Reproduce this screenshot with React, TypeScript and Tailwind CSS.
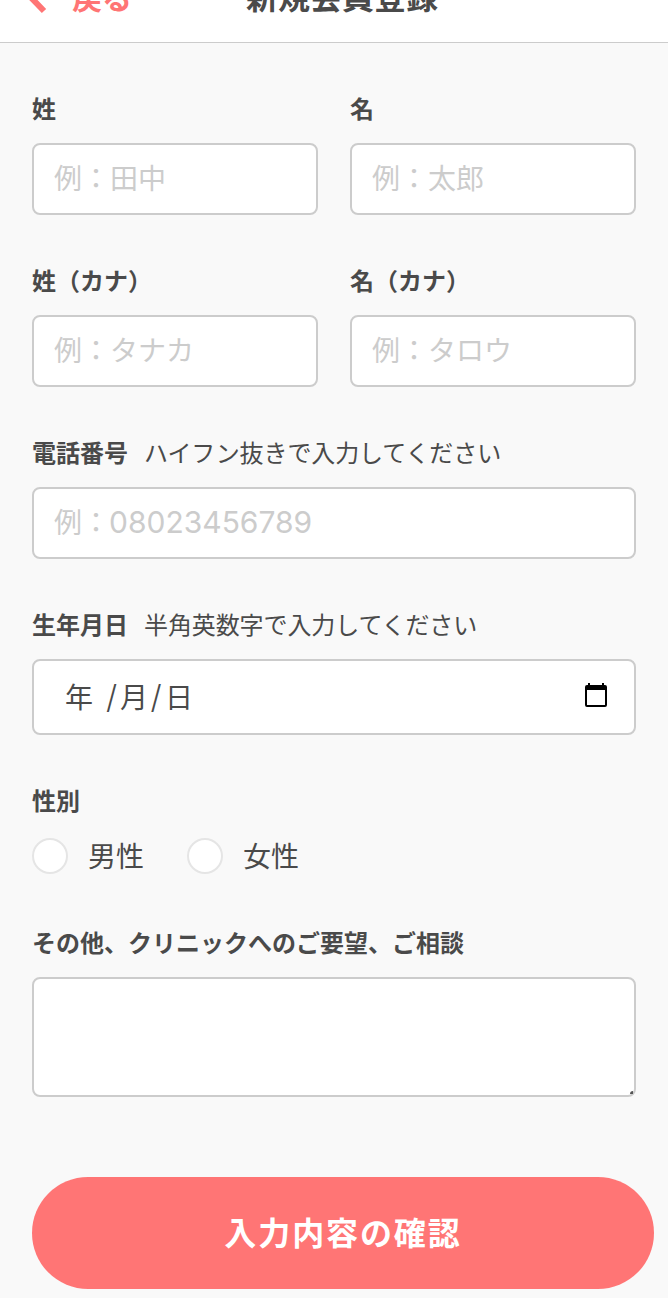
interface FieldProps {
  label: string;
  note?: string;
  children: React.ReactNode;
}

const Field = ({ label, note, children }: FieldProps) => {
  return (
    <div className="min-w-0 flex-1">
      <div className="mb-4 flex h-8 items-center gap-4 pb-0.5 text-[24px] leading-8">
        <span className="font-bold">{label}</span>
        {note && <span className="tracking-[-0.1px]">{note}</span>}
      </div>
      {children}
    </div>
  );
};

const TextInput = ({ placeholder }: { placeholder: string }) => {
  return (
    <input
      type="text"
      placeholder={placeholder}
      className="block h-[72px] w-full rounded-lg border-2 border-[#ccc] bg-white px-5 pt-0.5 text-[28px] outline-none placeholder:text-[#ccc]"
    />
  );
};

const Radio = ({ label }: { label: string }) => {
  return (
    <label className="flex h-9 items-center gap-5 text-[28px] leading-9">
      <span className="h-9 w-9 rounded-full border-2 border-[#e5e5e5] bg-white" />
      <span className="pt-1">{label}</span>
    </label>
  );
};

const CalendarIcon = () => {
  return (
    <svg width="24" height="26" viewBox="0 0 24 26" className="mb-0.5">
      <path
        fillRule="evenodd"
        fill="#000"
        d="M4 0h2v2h12V0h2v2h1a2 2 0 0 1 2 2v18a2 2 0 0 1-2 2H3a2 2 0 0 1-2-2V4a2 2 0 0 1 2-2h1zM3 7v15h18V7z"
      />
    </svg>
  );
};

export default function App() {
  return (
    <div className="h-[1298px] w-[668px] overflow-hidden bg-[#f9f9f9] font-['Liberation_Sans','Noto_Sans_CJK_JP',sans-serif] text-[#4a4a4a]">
      <header className="relative flex h-[43px] justify-center border-b border-[#ccc] bg-white">
        <a className="absolute -top-[26px] left-[27px] flex h-12 items-center gap-[25px] text-[30px] font-bold text-[#ff7575]">
          <svg
            width="20"
            height="32"
            viewBox="0 0 20 32"
            fill="none"
            stroke="currentColor"
            strokeWidth="6"
          >
            <path d="M17 1L3 14.500l14 14.500" />
          </svg>
          戻る
        </a>
        <h1 className="-mt-[26px] ml-4 h-12 text-[32px] font-bold leading-[48px]">
          新規会員登録
        </h1>
      </header>

      <form className="px-8 pt-[52px]">
        <div className="flex gap-8">
          <Field label="姓">
            <TextInput placeholder="例：田中" />
          </Field>
          <Field label="名">
            <TextInput placeholder="例：太郎" />
          </Field>
        </div>

        <div className="mt-[52px] flex gap-8">
          <Field label="姓（カナ）">
            <TextInput placeholder="例：タナカ" />
          </Field>
          <Field label="名（カナ）">
            <TextInput placeholder="例：タロウ" />
          </Field>
        </div>

        <div className="mt-[52px]">
          <Field label="電話番号" note="ハイフン抜きで入力してください">
            <div className="flex h-[72px] items-center rounded-lg border-2 border-[#ccc] bg-white px-5 text-[28px] leading-8 text-[#ccc]">
              <span className="pt-0.5">例：</span>
              <span className="-ml-px pb-0.5 font-['Inter'] text-[30px]">08023456789</span>
            </div>
          </Field>
        </div>

        <div className="mt-[52px]">
          <Field label="生年月日" note="半角英数字で入力してください">
            <div className="flex h-[76px] items-center justify-between rounded-lg border-2 border-[#ccc] bg-white pl-[31px] pr-[26px] text-[28px] leading-8">
              <div className="flex pt-[3px]">
                <span>年</span>
                <span className="-mt-0.5 ml-[10px] w-[17px] text-center font-['Inter'] text-[32px] font-light">
                  /
                </span>
                <span>月</span>
                <span className="-mt-0.5 w-4 text-center font-['Inter'] text-[32px] font-light">
                  /
                </span>
                <span className="ml-px">日</span>
              </div>
              <CalendarIcon />
            </div>
          </Field>
        </div>

        <div className="mt-[52px] h-8 pb-0.5 text-[24px] font-bold leading-[30px]">性別</div>
        <div className="mt-[19px] flex gap-[43px]">
          <Radio label="男性" />
          <Radio label="女性" />
        </div>

        <div className="mt-[55px]">
          <Field label="その他、クリニックへのご要望、ご相談">
            <textarea className="block h-[120px] w-full resize-none rounded-lg border-2 border-[#ccc] bg-white outline-none" />
            <div className="relative">
              <span className="absolute -top-[6px] right-[3px] h-[3px] w-[3px] rounded-tl-full bg-[#555]" />
            </div>
          </Field>
        </div>

        <button
          type="button"
          className="mt-20 block h-28 w-[622px] rounded-full bg-[#ff7575] pt-0.5 text-[32px] font-bold tracking-[1.9px] text-white"
        >
          入力内容の確認
        </button>
      </form>
    </div>
  );
}
